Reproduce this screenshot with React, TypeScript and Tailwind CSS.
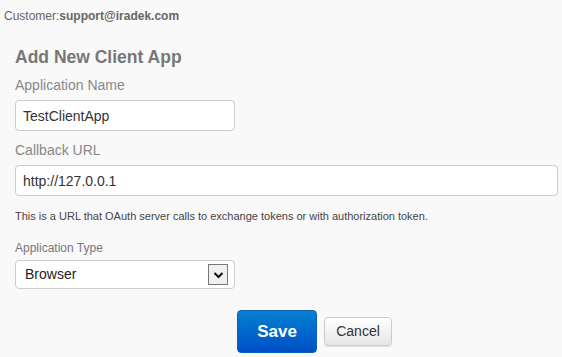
import * as React from 'react';

function Label({ children, small }: { children: React.ReactNode; small?: boolean }) {
  return (
    <label className={small ? 'block text-[12px] leading-[14px] text-[#777]' : 'block text-[14px] leading-[16px] text-[#888]'}>
      {children}
    </label>
  );
}

export default function App(): React.ReactElement {
  const [name, setName] = React.useState('TestClientApp');
  const [url, setUrl] = React.useState('http://127.0.0.1');
  const [type, setType] = React.useState('Browser');

  return (
    <div className="h-[357px] w-[562px] bg-[#f9f9f9] font-['Liberation_Sans',Arial,sans-serif]">
      <div className="px-[4px] pt-[9px] text-[12px] leading-[14px] text-[#666]">
        Customer:<span className="font-bold">support@iradek.com</span>
      </div>

      <div className="px-[15px] pt-[24px]">
        <h2 className="text-[17.5px] font-bold leading-[20px] text-[#777]">Add New Client App</h2>

        <div className="mt-[10px]">
          <Label>Application Name</Label>
          <input
            value={name}
            onChange={(e) => setName(e.target.value)}
            className="mt-[7px] block h-[31px] w-[220px] rounded-[4px] border border-[#ccc] bg-white px-[7px] text-[14px] text-[#333] outline-none"
          />
        </div>

        <div className="mt-[11px]">
          <Label>Callback URL</Label>
          <input
            value={url}
            onChange={(e) => setUrl(e.target.value)}
            className="mt-[7px] block h-[31px] w-[543px] rounded-[4px] border border-[#ccc] bg-white px-[7px] text-[14px] text-[#333] outline-none"
          />
        </div>

        <p className="mt-[13px] text-[11px] leading-[14px] text-[#444]">
          This is a URL that OAuth server calls to exchange tokens or with authorization token.
        </p>

        <div className="mt-[18px]">
          <Label small>Application Type</Label>
          <div className="relative mt-[5px] h-[29px] w-[220px] rounded-[4px] border border-[#ccc] bg-white">
            <select
              value={type}
              onChange={(e) => setType(e.target.value)}
              className="h-full w-full appearance-none bg-transparent px-[9px] text-[14px] text-[#222] outline-none"
            >
              <option>Browser</option>
              <option>Native</option>
              <option>Server</option>
            </select>
            <span className="pointer-events-none absolute right-[6px] top-[3px] flex h-[21px] w-[20px] items-center justify-center border border-[#777] bg-[#f0f0f0]">
              <svg width="11" height="8" viewBox="0 0 11 8">
                <path d="M1.5 2 L5.5 6 L9.5 2" fill="none" stroke="#111" strokeWidth="2" />
              </svg>
            </span>
          </div>
        </div>

        <div className="mt-[21px] flex items-center gap-[7px] pl-[222px]">
          <button className="h-[43px] w-[80px] rounded-[4px] border border-[#0a5fb8] bg-gradient-to-b from-[#0a80d0] to-[#004ec8] text-[17px] font-bold text-white">
            Save
          </button>
          <button className="h-[29px] w-[68px] rounded-[4px] border border-[#ccc] bg-gradient-to-b from-white to-[#e6e6e6] text-[14px] text-[#333] shadow-[0_1px_1px_rgba(0,0,0,0.1)]">
            Cancel
          </button>
        </div>
      </div>
    </div>
  );
}
